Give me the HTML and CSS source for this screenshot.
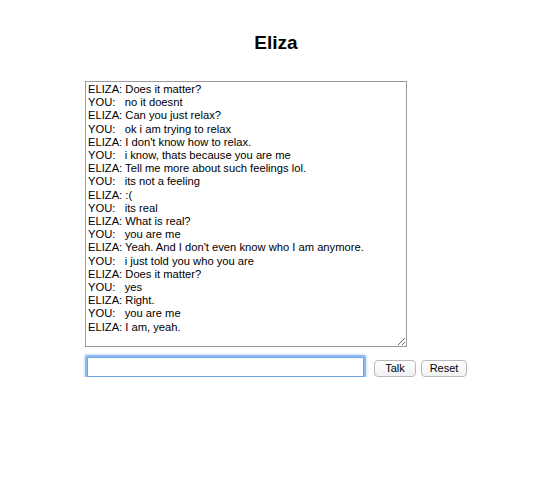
FILE: index.html
```html
<!DOCTYPE html>
<html lang="en">
<head>
  <meta charset="UTF-8">
  <title>Eliza</title>
  <meta name="viewport" content="width=device-width, initial-scale=1.0">
  <link rel="stylesheet" href="styles.css">
</head>
<body>

  <div class="wrap">
    <h1>Eliza</h1>

    <textarea id="log" class="log" readonly>ELIZA: Does it matter?
YOU:   no it doesnt
ELIZA: Can you just relax?
YOU:   ok i am trying to relax
ELIZA: I don't know how to relax.
YOU:   i know, thats because you are me
ELIZA: Tell me more about such feelings lol.
YOU:   its not a feeling
ELIZA: :(
YOU:   its real
ELIZA: What is real?
YOU:   you are me
ELIZA: Yeah. And I don't even know who I am anymore.
YOU:   i just told you who you are
ELIZA: Does it matter?
YOU:   yes
ELIZA: Right.
YOU:   you are me
ELIZA: I am, yeah.</textarea>

    <form class="talk-row" onsubmit="return false;">
      <input type="text" class="say" autofocus>
      <button type="submit" class="btn btn-talk">Talk</button>
      <button type="reset" class="btn btn-reset">Reset</button>
    </form>
  </div>

</body>
</html>
```

FILE: styles.css
```css
body {
  margin: 0;
  padding: 0 7px 0 0;
  font-family: "Liberation Sans", Arial, sans-serif;
  background: #fff;
  color: #000;
}

.wrap {
  width: 382px;
  margin: 0 auto;
  padding-top: 31px;
}

h1 {
  margin: 0 0 26px;
  font-size: 19px;
  line-height: 24px;
  text-align: center;
}

.log {
  display: block;
  box-sizing: border-box;
  width: 322px;
  height: 266px;
  margin: 0;
  padding: 1px 2px;
  border: 1px solid #9a9a9a;
  font-family: "Liberation Sans", Arial, sans-serif;
  font-size: 11.2px;
  line-height: 13.2px;
  color: #000;
  white-space: pre;
  overflow: hidden;
  resize: both;
  outline: none;
}

.talk-row {
  display: flex;
  align-items: flex-start;
  margin-top: 10px;
}

.say {
  flex-shrink: 0;
  box-sizing: border-box;
  width: 277px;
  height: 20px;
  margin: 0 0 0 2px;
  padding: 1px 3px;
  border: 1px solid #6ea2e3;
  border-radius: 1px;
  box-shadow: 0 0 0 2px rgba(120, 172, 242, 0.75), 0 0 2px 3px rgba(140, 188, 246, 0.4);
  outline: none;
  font-family: "Liberation Sans", Arial, sans-serif;
  font-size: 11px;
}

.btn {
  flex-shrink: 0;
  box-sizing: border-box;
  height: 17px;
  margin: 3px 0 0 5px;
  padding: 0;
  border: 1px solid #b9b9b9;
  border-radius: 4px;
  background: linear-gradient(#ffffff, #f1f1f1);
  font-family: "Liberation Sans", Arial, sans-serif;
  font-size: 11px;
  line-height: 15px;
  color: #000;
}

.btn-talk {
  margin-left: 10px;
  width: 42px;
}

.btn-reset {
  width: 46px;
}
```
